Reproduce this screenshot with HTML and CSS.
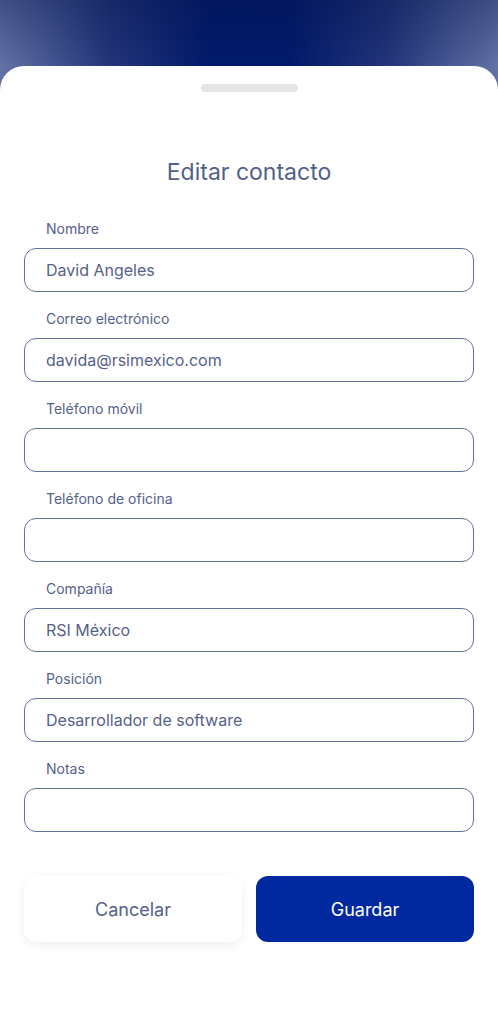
FILE: index.html
```html
<!DOCTYPE html>
<html lang="es">
<head>
    <meta charset="UTF-8">
    <meta name="viewport" content="width=device-width, initial-scale=1.0">
    <title>Editar contacto</title>
    <link rel="stylesheet" href="styles.css">
</head>
<body>
    <div class="sheet">
        <div class="handle"></div>
        <h1 class="title">Editar contacto</h1>

        <form class="contact-form">
            <div class="field">
                <label for="nombre">Nombre</label>
                <input type="text" id="nombre" value="David Angeles">
            </div>
            <div class="field">
                <label for="correo">Correo electrónico</label>
                <input type="email" id="correo" value="davida@rsimexico.com">
            </div>
            <div class="field">
                <label for="movil">Teléfono móvil</label>
                <input type="tel" id="movil">
            </div>
            <div class="field">
                <label for="oficina">Teléfono de oficina</label>
                <input type="tel" id="oficina">
            </div>
            <div class="field">
                <label for="compania">Compañía</label>
                <input type="text" id="compania" value="RSI México">
            </div>
            <div class="field">
                <label for="posicion">Posición</label>
                <input type="text" id="posicion" value="Desarrollador de software">
            </div>
            <div class="field">
                <label for="notas">Notas</label>
                <input type="text" id="notas">
            </div>

            <div class="actions">
                <button type="button" class="btn btn-cancel">Cancelar</button>
                <button type="submit" class="btn btn-save">Guardar</button>
            </div>
        </form>
    </div>
</body>
</html>
```

FILE: styles.css
```css
html, body {
    margin: 0;
    padding: 0;
}

body {
    font-family: Inter, "Noto Sans", sans-serif;
    background-color: #fff;
    background-image:
        linear-gradient(to bottom, rgba(0, 16, 70, 0.35), rgba(0, 16, 70, 0) 66px),
        linear-gradient(to right, #6272a6 0%, #23357a 22%, #011a6b 42%, #011a6b 58%, #23357a 78%, #6272a6 100%);
    background-size: 100% 90px, 100% 90px;
    background-repeat: no-repeat;
}

.sheet {
    margin-top: 66px;
    background-color: #fff;
    border-radius: 24px 24px 0 0;
    padding: 18px 24px 60px;
    min-height: 880px;
    box-sizing: border-box;
}

.handle {
    width: 97px;
    height: 8px;
    margin: 0 auto;
    border-radius: 4px;
    background-color: #e6e6e6;
}

.title {
    margin: 66px 0 34px;
    text-align: center;
    font-size: 23px;
    line-height: 28px;
    font-weight: 400;
    color: #535f89;
}

.contact-form {
    display: flex;
    flex-direction: column;
    gap: 18px;
}

.field {
    display: flex;
    flex-direction: column;
    gap: 10px;
}

.field label {
    padding-left: 22px;
    font-size: 14px;
    line-height: 18px;
    color: #56618a;
}

.field input {
    height: 44px;
    box-sizing: border-box;
    border: 1px solid #66719a;
    border-radius: 12px;
    padding: 0 21px;
    font-family: inherit;
    font-size: 16px;
    color: #56618a;
    background: #fff;
    outline: none;
}

.actions {
    display: flex;
    gap: 14px;
    margin-top: 26px;
}

.btn {
    flex: 1;
    height: 66px;
    border: none;
    border-radius: 12px;
    font-family: inherit;
    font-size: 18px;
}

.btn-cancel {
    background-color: #fff;
    color: #56618a;
    box-shadow: 0 3px 10px rgba(40, 50, 90, 0.08);
}

.btn-save {
    background-color: #0029a0;
    color: #fff;
}
```
